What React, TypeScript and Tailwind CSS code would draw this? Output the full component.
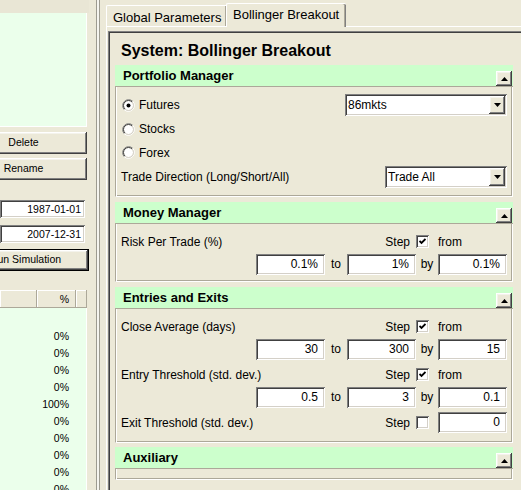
import React from "react";

const RAISED =
  "shadow-[inset_-1px_-1px_0_#404040,inset_1px_1px_0_#ffffff,inset_-2px_-2px_0_#808080,inset_2px_2px_0_#f4f3ec]";
const SUNKEN =
  "shadow-[inset_1px_1px_0_#808080,inset_-1px_-1px_0_#ffffff,inset_2px_2px_0_#404040,inset_-2px_-2px_0_#d4d0c8]";

const PERCENTS = ["0%", "0%", "0%", "0%", "100%", "0%", "0%", "0%", "0%", "0%"];

function DownArrow() {
  return (
    <svg width="7" height="4" viewBox="0 0 7 4">
      <polygon points="0,0 7,0 3.5,4" fill="#000" />
    </svg>
  );
}

function UpArrow() {
  return (
    <svg width="7" height="4" viewBox="0 0 7 4">
      <polygon points="0,4 7,4 3.5,0" fill="#000" />
    </svg>
  );
}

function Radio({ checked, label }: { checked?: boolean; label: string }) {
  return (
    <div className="flex items-center gap-[4px]">
      <svg width="13" height="13" viewBox="0 0 13 13" className="ml-[1px]">
        <circle cx="6.5" cy="6.5" r="4.5" fill="#fff" />
        <path d="M2.26 10.74 A6 6 0 0 1 10.74 2.26" stroke="#808080" fill="none" />
        <path d="M10.74 2.26 A6 6 0 0 1 2.26 10.74" stroke="#ffffff" fill="none" />
        <path d="M2.96 10.04 A5 5 0 0 1 10.04 2.96" stroke="#404040" fill="none" />
        <path d="M10.04 2.96 A5 5 0 0 1 2.96 10.04" stroke="#d4d0c8" fill="none" />
        {checked && <circle cx="6.5" cy="6.5" r="2" fill="#000" />}
      </svg>
      <span>{label}</span>
    </div>
  );
}

function Check({ checked }: { checked?: boolean }) {
  return (
    <div className={`w-[13px] h-[13px] bg-white ${SUNKEN} flex items-center justify-center`}>
      {checked && (
        <svg width="7" height="7" viewBox="0 0 7 7">
          <polyline points="0.5,3 2.5,5 6.5,1" stroke="#000" strokeWidth="1.8" fill="none" />
        </svg>
      )}
    </div>
  );
}

function Field({ value }: { value: string }) {
  return (
    <div className={`h-[21px] bg-white ${SUNKEN} text-right pr-[7px] leading-[21px]`}>{value}</div>
  );
}

function Combo({ value, width }: { value: string; width: string }) {
  return (
    <div className={`${width} h-[22px] bg-white ${SUNKEN} flex items-center pl-[3px] pr-[2px]`}>
      <span className="flex-1">{value}</span>
      <div className={`w-[16px] h-[18px] bg-[#ece9d8] ${RAISED} flex items-center justify-center`}>
        <DownArrow />
      </div>
    </div>
  );
}

function Section({
  title,
  children,
  bodyClass,
}: {
  title: string;
  children?: React.ReactNode;
  bodyClass: string;
}) {
  return (
    <div className="w-[398px]">
      <div className="h-[22px] bg-[#ccffcc] border-b border-[#aca899] flex items-center justify-between pl-[8px] pr-[1px]">
        <span className="text-[13px] font-bold">{title}</span>
        <div className={`w-[16px] h-[15px] bg-[#ece9d8] ${RAISED} flex items-center justify-center self-end`}>
          <UpArrow />
        </div>
      </div>
      <div
        className={`border-l border-l-[#aca899] border-r border-r-white border-b border-b-white shadow-[inset_1px_0_0_#ffffff,inset_-1px_-1px_0_#aca899] px-[5px] ${bodyClass}`}
      >
        {children}
      </div>
    </div>
  );
}

const GRID = "grid grid-cols-[minmax(0,1fr)_69px_22px_69px_22px_69px]";

function Param({ label, from, to, by }: { label: string; from: string; to: string; by: string }) {
  return (
    <div className={GRID}>
      <div className="col-span-3 h-[25px] flex items-center whitespace-nowrap">{label}</div>
      <div className="flex items-center justify-end pr-[6px]">Step</div>
      <div className="flex items-center">
        <Check checked />
      </div>
      <div className="flex items-center">from</div>
      <div />
      <Field value={from} />
      <div className="text-center leading-[21px]">to</div>
      <Field value={to} />
      <div className="text-center leading-[21px]">by</div>
      <Field value={by} />
    </div>
  );
}

function LeftPanel() {
  return (
    <div className="w-[89px] h-[490px] shrink-0 flex flex-col overflow-hidden text-[10.5px] text-[#000]">
      <div className="h-[13px] shrink-0 bg-[#e9e6d5]" />
      <div className="w-[87px] h-[114px] shrink-0 bg-[#ebffeb] border-r border-b border-white" />
      <div className="w-[87px] h-[22px] shrink-0 mt-[5px] overflow-hidden">
        <div className={`w-[127px] h-[22px] ml-[-40px] bg-[#ece9d8] ${RAISED} flex items-center justify-center`}>
          Delete
        </div>
      </div>
      <div className="w-[87px] h-[22px] shrink-0 mt-[4px] overflow-hidden">
        <div className={`w-[127px] h-[22px] ml-[-40px] bg-[#ece9d8] ${RAISED} flex items-center justify-center`}>
          Rename
        </div>
      </div>
      <div className={`w-[85px] h-[18px] shrink-0 mt-[20px] bg-white ${SUNKEN} text-right pr-[4px] leading-[18px]`}>
        1987-01-01
      </div>
      <div className={`w-[85px] h-[18px] shrink-0 mt-[7px] bg-white ${SUNKEN} text-right pr-[4px] leading-[18px]`}>
        2007-12-31
      </div>
      <div className="w-[89px] h-[22px] shrink-0 mt-[6px] overflow-hidden">
        <div className="w-[127px] h-[22px] ml-[-38px] border border-black">
          <div className={`h-full bg-[#ece9d8] ${RAISED} flex items-center justify-center`}>
            Run Simulation
          </div>
        </div>
      </div>
      <div className="w-[87px] h-[18px] shrink-0 mt-[19px] flex">
        <div className="w-[37px] h-full shadow-[inset_-1px_-1px_0_#aca899,inset_1px_1px_0_#ffffff]" />
        <div className="w-[39px] h-full shadow-[inset_-1px_-1px_0_#aca899,inset_1px_1px_0_#ffffff] text-right pr-[7px] leading-[18px]">
          %
        </div>
        <div className="w-[11px] h-full shadow-[inset_-1px_-1px_0_#aca899,inset_1px_1px_0_#ffffff]" />
      </div>
      <div className="w-[87px] flex-1 min-h-0 overflow-hidden bg-[#ebffeb] border-r border-white pt-[20px] pr-[17px]">
        {PERCENTS.map((p, i) => (
          <div key={i} className="h-[17px] leading-[17px] text-right">
            {p}
          </div>
        ))}
      </div>
    </div>
  );
}

export default function App() {
  return (
    <div className="w-[521px] h-[490px] overflow-hidden bg-[#ece9d8] flex text-black font-['Liberation_Sans',Arial,sans-serif]">
      <LeftPanel />
      <div className="w-[11px] shrink-0 flex">
        <div className="w-[7px]" />
        <div className="w-[1px] bg-[#9d9b90]" />
        <div className="w-[2px] bg-[#f6f5ef]" />
        <div className="w-[1px] bg-[#9d9b90]" />
      </div>
      <div className="w-[440px] shrink-0 pl-[6px] pt-[3px] flex flex-col">
        <div className="h-[23px] flex items-end text-[13px]">
          <div className="w-[120px] h-[21px] border-t border-l border-white rounded-tl-[2px] pl-[6px] pt-[2px] shadow-[inset_-1px_0_0_#aca899]">
            Global Parameters
          </div>
          <div className="w-[120px] h-[24px] mb-[-1px] z-10 relative bg-[#ece9d8] border-t border-l border-white rounded-t-[2px] shadow-[inset_-1px_0_0_#808080,inset_-2px_0_0_#aca899] pl-[6px] pt-[1px]">
            Bollinger Breakout
          </div>
        </div>
        <div className="flex-1 border-t border-l border-white pl-[1px] pt-[4px] flex flex-col">
          <div className="flex-1 shadow-[inset_1px_1px_0_#808080,inset_2px_2px_0_#404040] pl-[7px] pt-[2px] text-[12px]">
            <div className="h-[20px] mt-[8px] mb-[4px] pl-[6px] text-[16px] font-bold leading-[20px]">
              System: Bollinger Breakout
            </div>
            <Section title="Portfolio Manager" bodyClass="h-[110px] pt-[6px]">
              <div className="h-[24px] flex items-center justify-between">
                <Radio checked label="Futures" />
                <Combo value="86mkts" width="w-[162px]" />
              </div>
              <div className="h-[24px] flex items-center">
                <Radio label="Stocks" />
              </div>
              <div className="h-[23px] flex items-center">
                <Radio label="Forex" />
              </div>
              <div className="h-[26px] flex items-center justify-between">
                <span>Trade Direction (Long/Short/All)</span>
                <Combo value="Trade All" width="w-[122px]" />
              </div>
            </Section>
            <div className="h-[5px]" />
            <Section title="Money Manager" bodyClass="h-[58px] pt-[5px]">
              <Param label="Risk Per Trade (%)" from="0.1%" to="1%" by="0.1%" />
            </Section>
            <div className="h-[5px]" />
            <Section title="Entries and Exits" bodyClass="h-[134px] pt-[5px]">
              <Param label="Close Average (days)" from="30" to="300" by="15" />
              <div className="h-[2px]" />
              <Param label="Entry Threshold (std. dev.)" from="0.5" to="3" by="0.1" />
              <div className="h-[2px]" />
              <div className={GRID}>
                <div className="col-span-3 h-[25px] flex items-center whitespace-nowrap">
                  Exit Threshold (std. dev.)
                </div>
                <div className="flex items-center justify-end pr-[6px]">Step</div>
                <div className="flex items-center">
                  <Check />
                </div>
                <div className="flex items-center">
                  <div className="w-full">
                    <Field value="0" />
                  </div>
                </div>
              </div>
            </Section>
            <div className="h-[4px]" />
            <Section title="Auxiliary" bodyClass="h-[11px]" />
          </div>
        </div>
      </div>
    </div>
  );
}
